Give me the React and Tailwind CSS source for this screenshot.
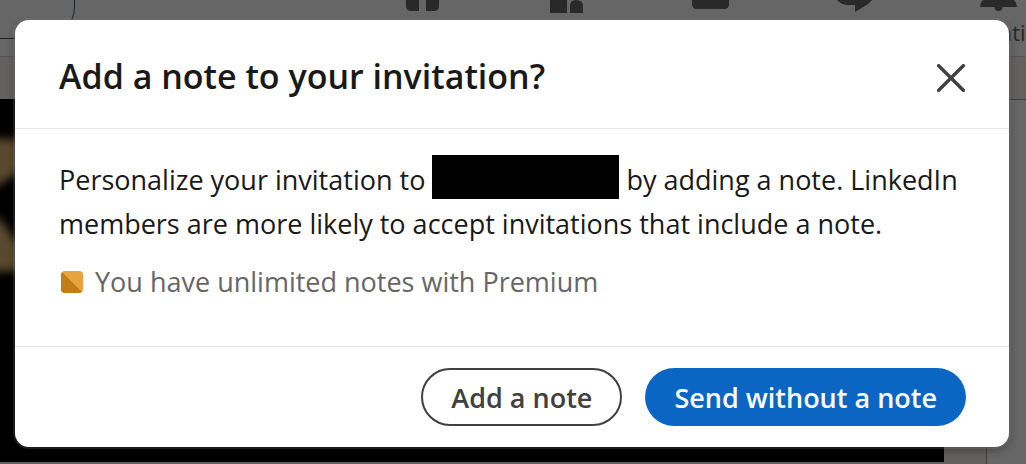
import { useState } from 'react'

const navIcons = [
  {
    name: 'Home',
    path: 'M2 0h13v11H7Q2 11 2 6zM22 0h13v6Q35 11 30 11H22z',
  },
  {
    name: 'My Network',
    path: 'M2 0h17v13H2zM22 13V6Q22 0 28 0Q35 0 35 6V13z',
  },
  {
    name: 'Jobs',
    path: 'M0 0h37V4Q37 9 32 9H5Q0 9 0 4z',
  },
  {
    name: 'Messaging',
    path: 'M1 0H36Q34 3 29 6L19 12V5H13Q5 5 1 0z',
  },
  {
    name: 'Notifications',
    label: 'Notifications',
    path: 'M3 0h31Q37 3 37 7H22.500A4 4 0 1 1 14.500 7H0Q0 3 3 0z',
  },
]

function PageBackground() {
  return (
    <div className="absolute inset-0 flex flex-col overflow-hidden bg-[#f4f2ee]">
      <nav className="flex h-[57px] shrink-0 justify-between border-b border-gray-300 bg-white">
        <div className="-ml-8 -mt-12 h-[87px] w-[107px] shrink-0 rounded-[32px] border border-gray-600" />
        <ul className="-mr-11 flex shrink-0">
          {navIcons.map((item) => (
            <li key={item.name} className="flex w-36 flex-col items-center">
              <svg width="37" height="20" viewBox="0 0 37 20" className="shrink-0 text-[#666666]" aria-hidden="true">
                <path d={item.path} fill="currentColor" />
              </svg>
              {item.label && <span className="text-[22px] leading-6 text-[#666666]">{item.label}</span>}
            </li>
          ))}
        </ul>
      </nav>
      <div className="h-[42px] shrink-0" />
      <div className="flex grow gap-[42px]">
        <div className="mb-[2px] grow bg-black">
          {/* blurred artwork on the cover photo */}
          <svg width="30" height="220" viewBox="0 0 30 220" aria-hidden="true">
            <defs>
              <filter id="soft" x="-50%" y="-20%" width="200%" height="140%">
                <feGaussianBlur stdDeviation="5" />
              </filter>
            </defs>
            <g fill="#dfb973" filter="url(#soft)">
              <path d="M-30 40H50V54L-5 88H-30z" />
              <path d="M-30 112L0 120L18 144H50V172H-30z" />
            </g>
          </svg>
        </div>
        <div className="w-10 shrink-0 border-l border-t border-gray-400 bg-white" />
      </div>
      <div className="absolute inset-0 bg-black/60" />
    </div>
  )
}

function PremiumIcon() {
  return (
    <svg width="22" height="22" viewBox="0 0 22 22" className="shrink-0" aria-hidden="true">
      <rect width="22" height="22" rx="4" fill="#e7a33e" />
      <path d="M1.200 1.200L20.800 20.800Q19.600 22 18 22H4Q0 22 0 18V4Q0 2.400 1.200 1.200z" fill="#c37d16" />
    </svg>
  )
}

export default function App() {
  const [open, setOpen] = useState(true)
  const close = () => setOpen(false)

  return (
    <div className="relative min-h-screen pb-4 pl-[15px] pr-[17px] pt-5 font-['Open_Sans',sans-serif]">
      <PageBackground />
      {open && (
        <div
          role="dialog"
          aria-modal="true"
          aria-labelledby="invite-title"
          className="relative rounded-[14px] bg-white shadow-[0_0_0_2px_rgba(140,140,140,0.2),0_4px_8px_rgba(0,0,0,0.3)]"
        >
          <header className="flex h-[109px] items-center justify-between border-b border-[#e6e6e6] px-11 pt-1">
            <h2 id="invite-title" className="text-[34px] font-semibold leading-10 text-[#191919]">
              Add a note to your invitation?
            </h2>
            <button type="button" aria-label="Dismiss" onClick={close} className="pt-1 text-[#404040]">
              <svg width="28" height="28" viewBox="0 0 28 28" fill="none" stroke="currentColor" strokeWidth="3.400">
                <path d="M0.500 0.500L27.500 27.500M27.500 0.500L0.500 27.500" />
              </svg>
            </button>
          </header>

          <div className="px-11 pb-11 pt-[29px]">
            <p className="text-[27px] leading-11 text-[#191919]">
              Personalize your invitation to{' '}
              <span className="-mb-[9px] -mt-2 inline-block h-11 w-[187px] bg-black align-baseline" /> by adding a
              note. LinkedIn members are more likely to accept invitations that include a note.
            </p>
            <p className="mt-4 flex items-center gap-3 pl-[2px] text-[27px] leading-10 text-[#666666]">
              <PremiumIcon />
              You have unlimited notes with Premium
            </p>
          </div>

          <footer className="flex justify-end gap-[23px] border-t border-[#e6e6e6] pl-11 pr-[43px] py-[21px]">
            <button
              type="button"
              className="h-[58px] rounded-full border-2 border-[#404040] px-7 pt-[2px] text-[27px] font-semibold text-[#404040]"
            >
              Add a note
            </button>
            <button
              type="button"
              onClick={close}
              className="h-[58px] rounded-full bg-[#0a66c2] px-[29px] pt-[2px] text-[27px] font-semibold text-white"
            >
              Send without a note
            </button>
          </footer>
        </div>
      )}
    </div>
  )
}
